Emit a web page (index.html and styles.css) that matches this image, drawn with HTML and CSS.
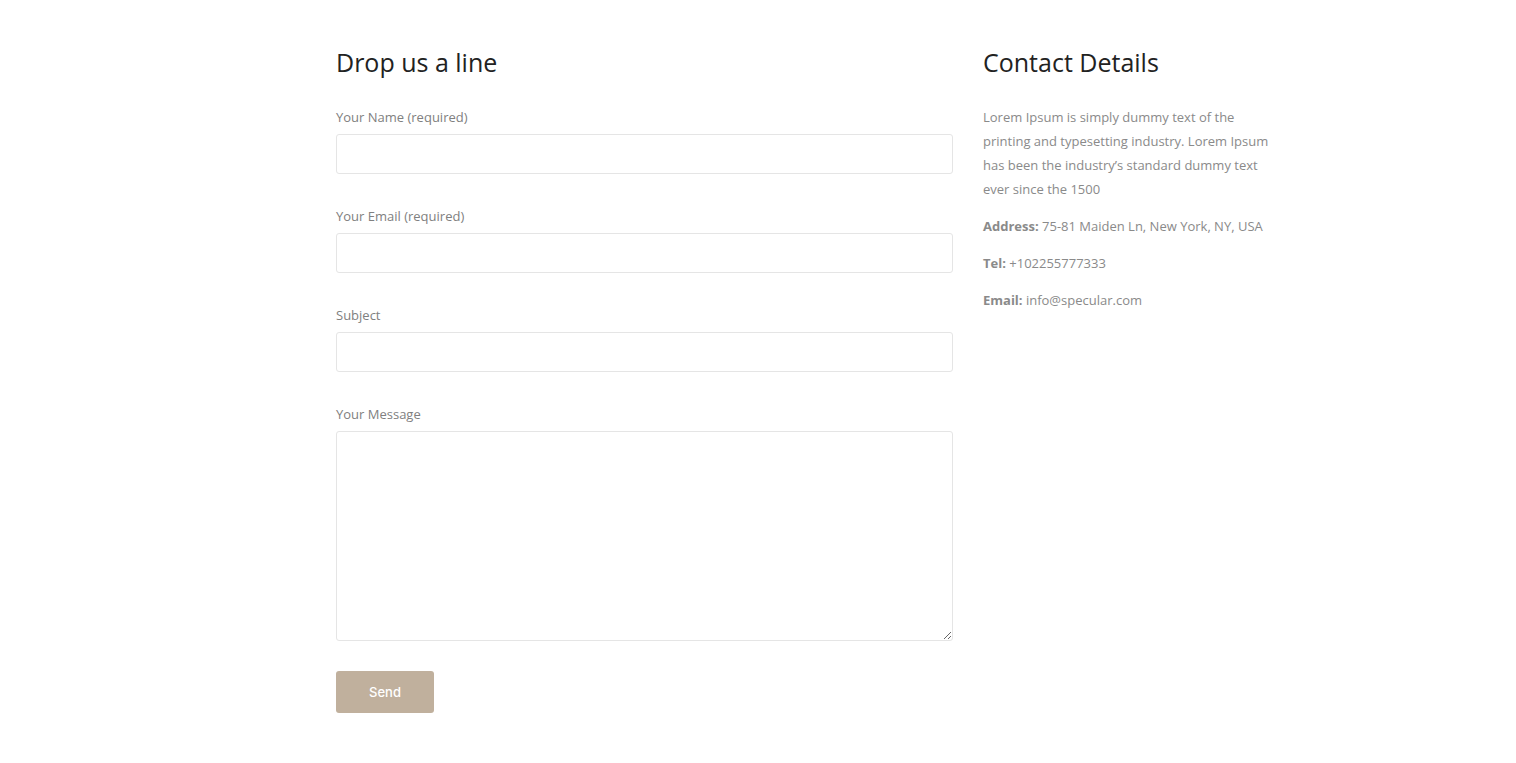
FILE: index.html
```html
<!DOCTYPE html>
<html lang="en">
<head>
<meta charset="utf-8">
<title>Contact</title>
<link rel="stylesheet" href="styles.css">
</head>
<body>
<main class="page">
  <section class="form-col">
    <h2 class="title">Drop us a line</h2>
    <form class="form">
      <div class="field">
        <label class="label">Your Name (required)</label>
        <input class="input" type="text">
      </div>
      <div class="field">
        <label class="label">Your Email (required)</label>
        <input class="input" type="email">
      </div>
      <div class="field">
        <label class="label">Subject</label>
        <input class="input" type="text">
      </div>
      <div class="field">
        <label class="label">Your Message</label>
        <textarea class="input textarea"></textarea>
      </div>
      <button class="btn" type="button">Send</button>
    </form>
  </section>
  <aside class="info-col">
    <h2 class="title">Contact Details</h2>
    <div class="info">
      <p>Lorem Ipsum is simply dummy text of the printing and typesetting industry. Lorem Ipsum has been the industry’s standard dummy text ever since the 1500</p>
      <p><b>Address:</b> 75-81 Maiden Ln, New York, NY, USA</p>
      <p><b>Tel:</b> +102255777333</p>
      <p><b>Email:</b> info@specular.com</p>
    </div>
  </aside>
</main>
</body>
</html>
```
FILE: styles.css
```css
* { box-sizing: border-box; }
html, body { margin: 0; background: #fff; }
body {
  font-family: "Open Sans", "Liberation Sans", sans-serif;
  color: #888;
}
.page {
  display: flex;
  gap: 30px;
  padding: 44px 0 0 336px;
}
.form-col { width: 617px; }
.info-col { width: 300px; }
.title {
  margin: 0 0 25px;
  font-size: 25px;
  line-height: 36px;
  font-weight: 400;
  color: #222;
}
.form { display: flex; flex-direction: column; gap: 30px; }
.field { display: flex; flex-direction: column; gap: 5px; }
.label {
  font-size: 13px;
  line-height: 24px;
  color: #808080;
}
.input {
  display: block;
  width: 100%;
  height: 40px;
  border: 1px solid #e5e5e5;
  border-radius: 3px;
  background: #fff;
  font: inherit;
  margin: 0;
  padding: 0 12px;
}
.textarea { height: 210px; resize: vertical; }
.btn {
  align-self: flex-start;
  width: 98px;
  height: 42px;
  border: 0;
  border-radius: 3px;
  background: #c0b09d;
  color: #fff;
  font-family: Inter, Roboto, "Liberation Sans", sans-serif;
  font-size: 13px;
  font-weight: 500;
  cursor: pointer;
}
.info p {
  margin: 0 0 13px;
  font-size: 13px;
  line-height: 24px;
  color: #8a8a8a;
}
.info b { font-weight: 700; color: #8a8a8a; }
```
